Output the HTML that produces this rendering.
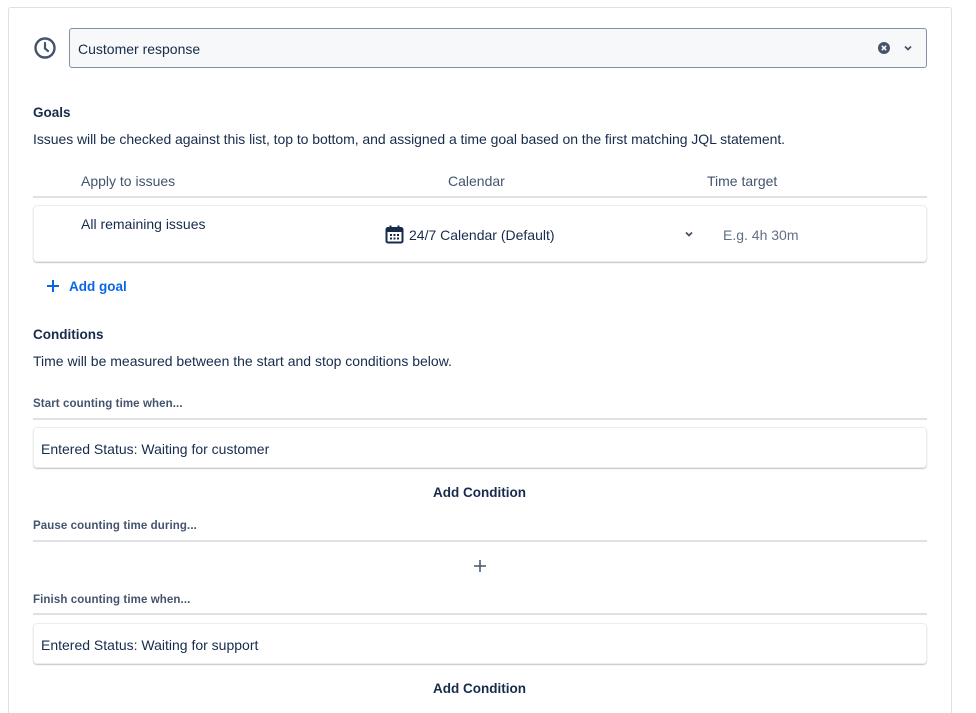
<!DOCTYPE html>
<html style="overflow:hidden;height:713px"><head><style>
*{box-sizing:border-box;margin:0;padding:0}
body{width:976px;height:713px;overflow:hidden;background:#fff;font-family:"Liberation Sans",sans-serif;color:#172b4d;position:relative}
.a{position:absolute;white-space:nowrap}
.t14{font-size:14px;line-height:16px}
.lbl{font-size:11.5px;font-weight:bold;color:#44546f;line-height:14px;letter-spacing:0.1px}
.hr{position:absolute;left:33px;width:894px;height:2px;background:#dfe1e6}
.box{position:absolute;left:33px;width:894px;border:1px solid #ebecf0;border-radius:4px;box-shadow:0 1px 1px #c1c7d0}
.btn{font-size:13.5px;font-weight:bold;color:#172b4d}
</style></head><body>
<div style="position:absolute;left:8px;top:7px;width:944px;height:706px;border:1px solid #dfe1e6;border-bottom:none;border-radius:3px 3px 0 0"></div>
<svg class="a" style="left:33px;top:36px" width="24" height="24" viewBox="0 0 24 24"><circle cx="12" cy="12" r="9.5" fill="none" stroke="#44546f" stroke-width="2.4"/><path d="M12 7v5.5l3 2.5" fill="none" stroke="#44546f" stroke-width="2.2" stroke-linecap="round"/></svg>
<div style="position:absolute;left:69px;top:28px;width:858px;height:40px;background:#f7f8f9;border:1px solid #8590a2;border-radius:3px"></div>
<div class="a t14" style="left:78px;top:41px">Customer response</div>
<svg class="a" style="left:877px;top:41px" width="14" height="14" viewBox="0 0 14 14"><circle cx="7" cy="7" r="6" fill="#44546f"/><path d="M4.8 4.8l4.4 4.4M9.2 4.8l-4.4 4.4" stroke="#fff" stroke-width="1.5"/></svg>
<svg class="a" style="left:902px;top:43px" width="12" height="10" viewBox="0 0 12 10"><path d="M3 3.5l3 3 3-3" fill="none" stroke="#44546f" stroke-width="1.8"/></svg>
<div class="a" style="left:33px;top:105px;font-size:13.5px;font-weight:bold">Goals</div>
<div class="a t14" style="left:33px;top:131px;letter-spacing:-0.05px">Issues will be checked against this list, top to bottom, and assigned a time goal based on the first matching JQL statement.</div>
<div class="a t14" style="left:81px;top:173px;color:#44546f">Apply to issues</div>
<div class="a t14" style="left:448px;top:173px;color:#44546f">Calendar</div>
<div class="a t14" style="left:707px;top:173px;color:#44546f">Time target</div>
<div class="hr" style="top:196px"></div>
<div class="box" style="top:205px;height:57px"></div>
<div class="a t14" style="left:81px;top:216px">All remaining issues</div>
<svg class="a" style="left:385px;top:225px" width="19" height="19" viewBox="0 0 19 19"><rect x="1.5" y="3" width="16" height="14.5" rx="1.5" fill="none" stroke="#172b4d" stroke-width="2"/><rect x="1.5" y="3" width="16" height="4" fill="#172b4d"/><rect x="4.5" y="0.5" width="2" height="4" fill="#172b4d"/><rect x="12.5" y="0.5" width="2" height="4" fill="#172b4d"/><g fill="#172b4d"><rect x="5" y="9" width="2" height="2"/><rect x="8.5" y="9" width="2" height="2"/><rect x="12" y="9" width="2" height="2"/><rect x="5" y="12.5" width="2" height="2"/><rect x="8.5" y="12.5" width="2" height="2"/><rect x="12" y="12.5" width="2" height="2"/></g></svg>
<div class="a t14" style="left:409px;top:227px">24/7 Calendar (Default)</div>
<svg class="a" style="left:683px;top:229px" width="12" height="10" viewBox="0 0 12 10"><path d="M3 3.5l3 3 3-3" fill="none" stroke="#44546f" stroke-width="1.8"/></svg>
<div class="a t14" style="left:723px;top:227px;color:#626f86">E.g. 4h 30m</div>
<svg class="a" style="left:46px;top:279px" width="14" height="14" viewBox="0 0 14 14"><path d="M7 1v12M1 7h12" stroke="#0c66e4" stroke-width="2"/></svg>
<div class="a" style="left:69px;top:279px;font-size:13.5px;font-weight:bold;color:#0c66e4">Add goal</div>
<div class="a" style="left:33px;top:327px;font-size:13.5px;font-weight:bold">Conditions</div>
<div class="a t14" style="left:33px;top:353px">Time will be measured between the start and stop conditions below.</div>
<div class="a lbl" style="left:33px;top:397px">Start counting time when...</div>
<div class="hr" style="top:418px"></div>
<div class="box" style="top:427px;height:41px"></div>
<div class="a t14" style="left:41px;top:441px">Entered Status: Waiting for customer</div>
<div class="a btn" style="left:433px;top:485px">Add Condition</div>
<div class="a lbl" style="left:33px;top:519px">Pause counting time during...</div>
<div class="hr" style="top:540px"></div>
<svg class="a" style="left:473px;top:559px" width="14" height="14" viewBox="0 0 14 14"><path d="M7 1v12M1 7h12" stroke="#44546f" stroke-width="1.5"/></svg>
<div class="a lbl" style="left:33px;top:593px">Finish counting time when...</div>
<div class="hr" style="top:613px"></div>
<div class="box" style="top:623px;height:41px"></div>
<div class="a t14" style="left:41px;top:637px">Entered Status: Waiting for support</div>
<div class="a btn" style="left:433px;top:681px">Add Condition</div>
</body></html>
